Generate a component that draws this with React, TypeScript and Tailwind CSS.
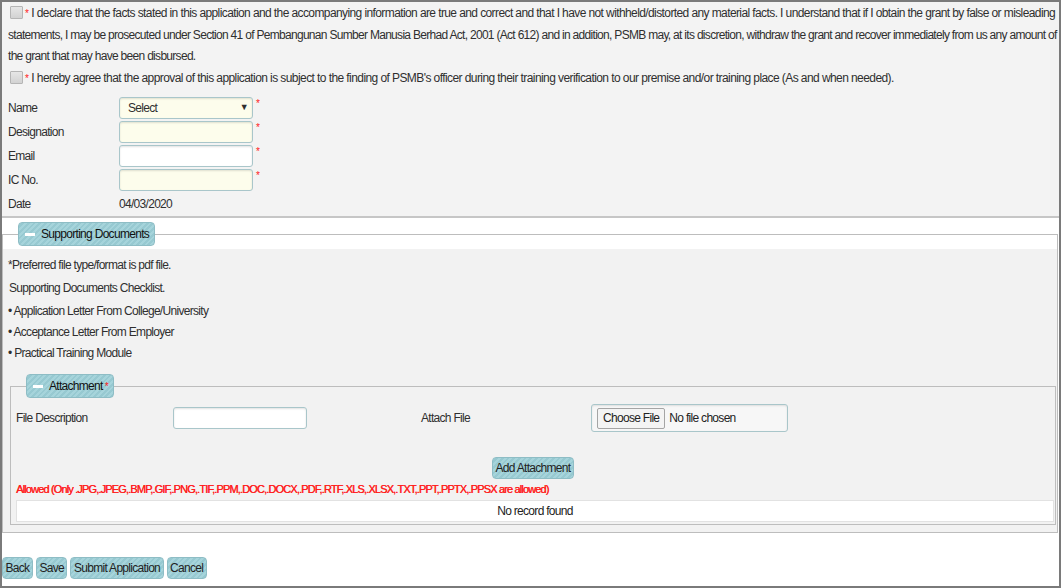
const FONT = "font-['Liberation_Sans','Arial',sans-serif] tracking-[-0.7px]";

const BTN =
  "h-[22px] rounded-[4px] border border-[#8ebdc5] bg-[repeating-linear-gradient(135deg,#a6d4db_0px,#a6d4db_2px,#97c9d1_2px,#97c9d1_4px)] px-[2.5px] text-[12px] leading-[20px] text-[#222]";

const INPUT =
  "h-[22px] w-[134px] rounded-[3px] border border-[#a9c6ca] shadow-[inset_0_1px_2px_rgba(0,0,0,0.12)]";

function Check() {
  return (
    <span className="mr-[2px] inline-block h-[13px] w-[13px] translate-y-[2px] rounded-[1px] border border-[#b5b5b5] bg-[linear-gradient(#e6e6e6,#d2d2d2)]" />
  );
}

function Star() {
  return <span className="mr-[3px] text-[10px] text-[#ff2020]">*</span>;
}

function Legend({ children }: { children: React.ReactNode }) {
  return (
    <legend className="ml-[15px] flex h-[24px] items-center rounded-[4px] border border-[#8ebdc5] bg-[repeating-linear-gradient(135deg,#a6d4db_0px,#a6d4db_2px,#97c9d1_2px,#97c9d1_4px)] pl-[6px] pr-[5px] text-[12px] text-[#111]">
      <span className="mr-[6px] inline-block h-[3px] w-[10px] bg-white" />
      {children}
    </legend>
  );
}

const formRows = [
  { label: "Name", kind: "select" },
  { label: "Designation", kind: "yellow" },
  { label: "Email", kind: "white" },
  { label: "IC No.", kind: "yellow" },
];

const checklist = [
  "Application Letter From College/University",
  "Acceptance Letter From Employer",
  "Practical Training Module",
];

export default function App() {
  return (
    <div
      className={`${FONT} h-[588px] w-[1061px] overflow-hidden border-2 border-[#7a7a7a] bg-white text-[12px] text-[#2f2f2f]`}
    >
      {/* declaration + signatory */}
      <div className="h-[216px] border-b-2 border-[#c6c6c6] bg-[#f3f3f3] pl-[6px] pt-[1px]">
        <div className="leading-[21.5px]">
          <div className="whitespace-nowrap pl-[2px] tracking-[-0.6px]">
            <Check />
            <Star />I declare that the facts stated in this application and the accompanying information are true and correct and that I have not withheld/distorted any material facts. I understand that if I obtain the grant by false or misleading
          </div>
          <div className="whitespace-nowrap tracking-[-0.7px]">
            statements, I may be prosecuted under Section 41 of Pembangunan Sumber Manusia Berhad Act, 2001 (Act 612) and in addition, PSMB may, at its discretion, withdraw the grant and recover immediately from us any amount of
          </div>
          <div className="whitespace-nowrap">the grant that may have been disbursed.</div>
          <div className="whitespace-nowrap pl-[2px] tracking-[-0.58px]">
            <Check />
            <Star />I hereby agree that the approval of this application is subject to the finding of PSMB's officer during their training verification to our premise and/or training place (As and when needed).
          </div>
        </div>
        <div className="mt-[8px] flex flex-col gap-[2px]">
          {formRows.map((r) => (
            <div key={r.label} className="flex h-[22px] items-center">
              <span className="w-[111px]">{r.label}</span>
              {r.kind === "select" ? (
                <div className={`${INPUT} flex items-center justify-between bg-[#fdfdec] pl-[8px] pr-[4px]`}>
                  <span>Select</span>
                  <span className="text-[9px]">▼</span>
                </div>
              ) : (
                <div className={`${INPUT} ${r.kind === "yellow" ? "bg-[#fdfdec]" : "bg-white"}`} />
              )}
              <span className="ml-[3px] self-start text-[10px] leading-[14px] text-[#ff2020]">*</span>
            </div>
          ))}
          <div className="flex h-[22px] items-center">
            <span className="w-[111px]">Date</span>
            <span>04/03/2020</span>
          </div>
        </div>
      </div>

      {/* supporting documents */}
      <div className="pt-[4px]">
        <fieldset className="mr-[1px] border border-[#bdbdbd]">
          <Legend>Supporting Documents</Legend>
          <div className="mt-[3px] bg-[#f2f2f2] pb-[7px] pl-[5px] pr-[1px] pt-[6px] leading-[21px]">
            <div className="mb-[2px]">*Preferred file type/format is pdf file.</div>
            <div className="mb-[2px] pl-[1px]">Supporting Documents Checklist.</div>
            {checklist.map((c) => (
              <div key={c}>• {c}</div>
            ))}

            <fieldset className="ml-[2px] mt-[10px] border border-[#bdbdbd]">
              <Legend>
                Attachment<span className="ml-[2px] text-[10px] text-[#ff2020]">*</span>
              </Legend>
              <div className="px-[5px] pb-[2px]">
                <div className="mt-[6px] flex items-center">
                  <span className="w-[157px]">File Description</span>
                  <div className={`${INPUT} w-[133px] bg-white`} />
                  <span className="ml-[114px] w-[170px]">Attach File</span>
                  <div className="flex h-[28px] w-[197px] items-center rounded-[3px] border border-[#a9c6ca] bg-[#f7f7f7] pl-[5px] shadow-[inset_0_1px_2px_rgba(0,0,0,0.1)]">
                    <span className="h-[21px] rounded-[2px] border border-[#a5a5a5] bg-[#f4f4f4] px-[5px] leading-[19px] text-[#222]">
                      Choose File
                    </span>
                    <span className="ml-[4px] text-[#222]">No file chosen</span>
                  </div>
                </div>
                <div className="mt-[25px] flex justify-center">
                  <button className={BTN}>Add Attachment</button>
                </div>
                <div className="mt-[1px] text-[11px] leading-[18px] tracking-[-0.85px] text-[#ff1f1f] [text-shadow:0.4px_0_0_#ff1f1f]">
                  Allowed (Only .JPG,.JPEG,.BMP,.GIF,.PNG,.TIF,.PPM,.DOC,.DOCX,.PDF,.RTF,.XLS,.XLSX,.TXT,.PPT,.PPTX,.PPSX are allowed)
                </div>
                <div className="mr-[-4px] mt-[2px] flex h-[22px] items-center justify-center border border-[#e2e2e2] bg-white text-[#222]">
                  No record found
                </div>
              </div>
            </fieldset>
          </div>
        </fieldset>
      </div>

      {/* actions */}
      <div className="mt-[24px] flex gap-[3px]">
        <button className={BTN}>Back</button>
        <button className={BTN}>Save</button>
        <button className={BTN}>Submit Application</button>
        <button className={BTN}>Cancel</button>
      </div>
    </div>
  );
}
